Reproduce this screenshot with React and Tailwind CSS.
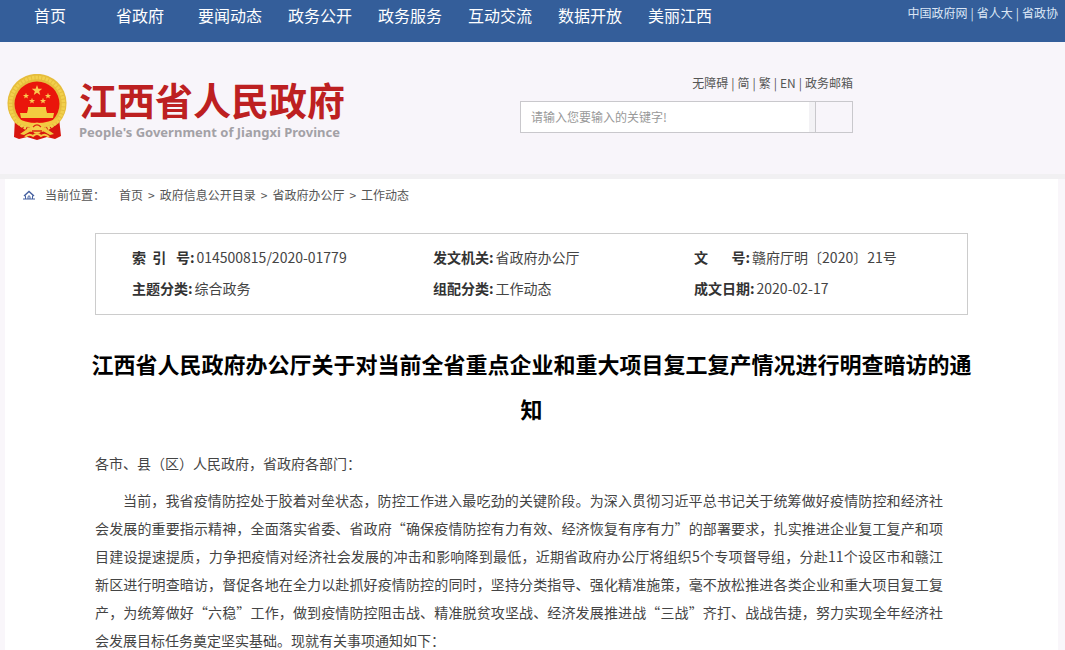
import { useState } from "react";

const navItems = ["首页", "省政府", "要闻动态", "政务公开", "政务服务", "互动交流", "数据开放", "美丽江西"];
const outerLinks = ["中国政府网", "省人大", "省政协"];
const toolLinks = ["无障碍", "简", "繁", "EN", "政务邮箱"];
const crumbs = ["首页", "政府信息公开目录", "省政府办公厅", "工作动态"];

const meta = [
  { label: "索\u00a0\u00a0引\u00a0\u00a0\u00a0号:", value: "014500815/2020-01779" },
  { label: "发文机关:", value: "省政府办公厅" },
  { label: "文\u3000\u00a0\u00a0\u00a0号:", value: "赣府厅明〔2020〕21号" },
  { label: "主题分类:", value: "综合政务" },
  { label: "组配分类:", value: "工作动态" },
  { label: "成文日期:", value: "2020-02-17" },
];

function Star({ x, y, r }) {
  const points = Array.from({ length: 10 }, (_, i) => {
    const radius = i % 2 ? r * 0.42 : r;
    const a = (Math.PI / 5) * i - Math.PI / 2;
    return `${x + radius * Math.cos(a)},${y + radius * Math.sin(a)}`;
  }).join(" ");
  return <polygon points={points} fill="#fbc94f" />;
}

function Emblem() {
  return (
    <svg viewBox="0 0 60 66" className="w-[60px] h-[66px] shrink-0" aria-hidden="true">
      {/* Ribbon */}
      <path d="M8 44 L7 63 L12 65 L20 63 L30 66 L40 63 L48 65 L54 62 L52 44Z" fill="#d8150f" />
      {/* Wheat ring */}
      <path d="M8 49 A29.5 29.5 0 1 1 52 49 L46 53 H14Z" fill="#e6bd3c" />
      <circle cx="30" cy="30" r="26.5" fill="none" stroke="#f2d04c" strokeWidth="3.5" strokeDasharray="2.5 1" />
      <circle cx="30" cy="30" r="22.5" fill="#ea150b" />
      <Star x={30} y={16.5} r={5.5} />
      <Star x={19} y={22} r={3.2} />
      <Star x={41} y={22} r={3.2} />
      <Star x={25} y={27} r={3.2} />
      <Star x={36} y={27} r={3.2} />
      {/* Gate */}
      <path d="M21 33 H39 V35 L40 39 H47 L46 44 H14 L13 39 H20 L21 35Z" fill="#f3cd40" />
      {/* Drape */}
      <path d="M8 43 Q18 49 30 49 Q42 49 52 43 L50 48 Q42 52 37 53 L47 60 L43 61 L34 56 H26 L17 61 L13 60 L23 53 Q18 52 10 48Z" fill="#f2ca42" />
      <path d="M17 46 H43 Q30 50 17 46Z" fill="#d8150f" />
      {/* Cog and knots */}
      <circle cx="30" cy="54" r="5.5" fill="#f6cf4c" />
      <path d="M26 53 Q30 49 34 53" fill="none" stroke="#dc2a12" strokeWidth="1.2" />
      <path d="M25 57 H35" stroke="#dc2a12" strokeWidth="1.5" />
      <path d="M18 63 Q22 59 26 62 Q30 58 34 62 Q38 59 42 63" fill="none" stroke="#f3c843" strokeWidth="2" />
    </svg>
  );
}

function HomeIcon() {
  return (
    <svg viewBox="0 0 12 10" className="w-3 h-[10px]" fill="none" stroke="#4560a0" aria-hidden="true">
      <path d="M1 6 L6 1.5 L11 6" strokeWidth="1.4" />
      <path d="M2.5 5.5 V9 M9.5 5.5 V9 M0 9 H12" />
      <path d="M5 9 V6.5 Q6 5 7 6.5 V9" />
    </svg>
  );
}

function PipeLinks({ items, className }) {
  return (
    <ul className={`flex ${className}`}>
      {items.map((item, i) => (
        <li key={item}>
          {i > 0 && <span className="mx-[3px]">|</span>}
          <a href="#">{item}</a>
        </li>
      ))}
    </ul>
  );
}

export default function App() {
  const [keyword, setKeyword] = useState("");

  return (
    <div lang="zh-CN" className="min-h-screen flex flex-col bg-[#f9f6fa] font-['Noto_Sans_CJK_SC',sans-serif] text-[#444]">
      {/* Top bar */}
      <nav className="h-[42px] px-[5px] flex justify-between bg-[#345e9a] text-white">
        <ul className="flex text-base leading-[30px]">
          {navItems.map((item) => (
            <li key={item} className="w-[90px] text-center">
              <a href="#">{item}</a>
            </li>
          ))}
        </ul>
        <PipeLinks items={outerLinks} className="pr-0.5 text-xs leading-[26px] text-[#dbe6f5]" />
      </nav>

      {/* Header */}
      <header className="h-[137px] border-b-[5px] border-[#f1f0f2] bg-[#f8f5fa] flex pl-[7px]">
        <a href="#" className="w-[513px] pt-8 flex gap-3">
          <Emblem />
          <span>
            <span className="block text-[38px] leading-[50px] font-bold text-[#bd2021]">江西省人民政府</span>
            <span className="block font-['Noto_Sans',sans-serif] text-[13px] leading-4 font-bold text-[#a3a1a6]">
              People&#39;s Government of Jiangxi Province
            </span>
          </span>
        </a>
        <div className="w-[333px] pt-[31px]">
          <PipeLinks items={toolLinks} className="justify-end text-xs leading-5 text-[#555]" />
          <form onSubmit={(e) => e.preventDefault()} className="mt-2 h-8 flex border border-[#c9c8cc] bg-[#f3f2f5]">
            <input
              type="text"
              aria-label="关键字"
              placeholder="请输入您要输入的关键字!"
              value={keyword}
              onChange={(e) => setKeyword(e.target.value)}
              className="flex-1 min-w-0 mr-1.5 px-2.5 bg-white text-xs outline-none placeholder:text-[#999]"
            />
            <button type="submit" aria-label="搜索" className="w-[37px] border-l border-[#c9c8cc] bg-[#f8f5fa]" />
          </form>
        </div>
      </header>

      {/* Document */}
      <main className="flex-1 ml-[5px] mr-[7px] bg-white">
        <div className="h-8 pl-[18px] flex items-center text-xs text-[#555]">
          <HomeIcon />
          <span className="ml-2.5 mr-3.5">当前位置：</span>
          <ol className="flex">
            {crumbs.map((crumb, i) => (
              <li key={crumb}>
                {i > 0 && <span className="mx-[5px]">&gt;</span>}
                <a href="#">{crumb}</a>
              </li>
            ))}
          </ol>
        </div>

        <article className="px-[90px] pt-[22px]">
          <dl className="grid grid-cols-[301fr_261fr_273fr] pl-9 pt-2 pb-[10px] border border-[#ccc] text-sm leading-[31px]">
            {meta.map((m) => (
              <div key={m.label} className="flex gap-0.5">
                <dt className="font-bold text-[#333]">{m.label}</dt>
                <dd>{m.value}</dd>
              </div>
            ))}
          </dl>

          <h1 className="-mx-2 mt-[26px] text-center text-[22px] leading-[45px] font-bold text-black">
            江西省人民政府办公厅关于对当前全省重点企业和重大项目复工复产情况进行明查暗访的通知
          </h1>

          <div className="mt-[18px] max-w-[848px] text-sm leading-7 text-justify">
            <p>各市、县（区）人民政府，省政府各部门：</p>
            <p className="mt-[9px] indent-7">
              当前，我省疫情防控处于胶着对垒状态，防控工作进入最吃劲的关键阶段。为深入贯彻习近平总书记关于统筹做好疫情防控和经济社会发展的重要指示精神，全面落实省委、省政府“确保疫情防控有力有效、经济恢复有序有力”的部署要求，扎实推进企业复工复产和项目建设提速提质，力争把疫情对经济社会发展的冲击和影响降到最低，近期省政府办公厅将组织5个专项督导组，分赴11个设区市和赣江新区进行明查暗访，督促各地在全力以赴抓好疫情防控的同时，坚持分类指导、强化精准施策，毫不放松推进各类企业和重大项目复工复产，为统筹做好“六稳”工作，做到疫情防控阻击战、精准脱贫攻坚战、经济发展推进战“三战”齐打、战战告捷，努力实现全年经济社会发展目标任务奠定坚实基础。现就有关事项通知如下：
            </p>
          </div>
        </article>
      </main>
    </div>
  );
}
